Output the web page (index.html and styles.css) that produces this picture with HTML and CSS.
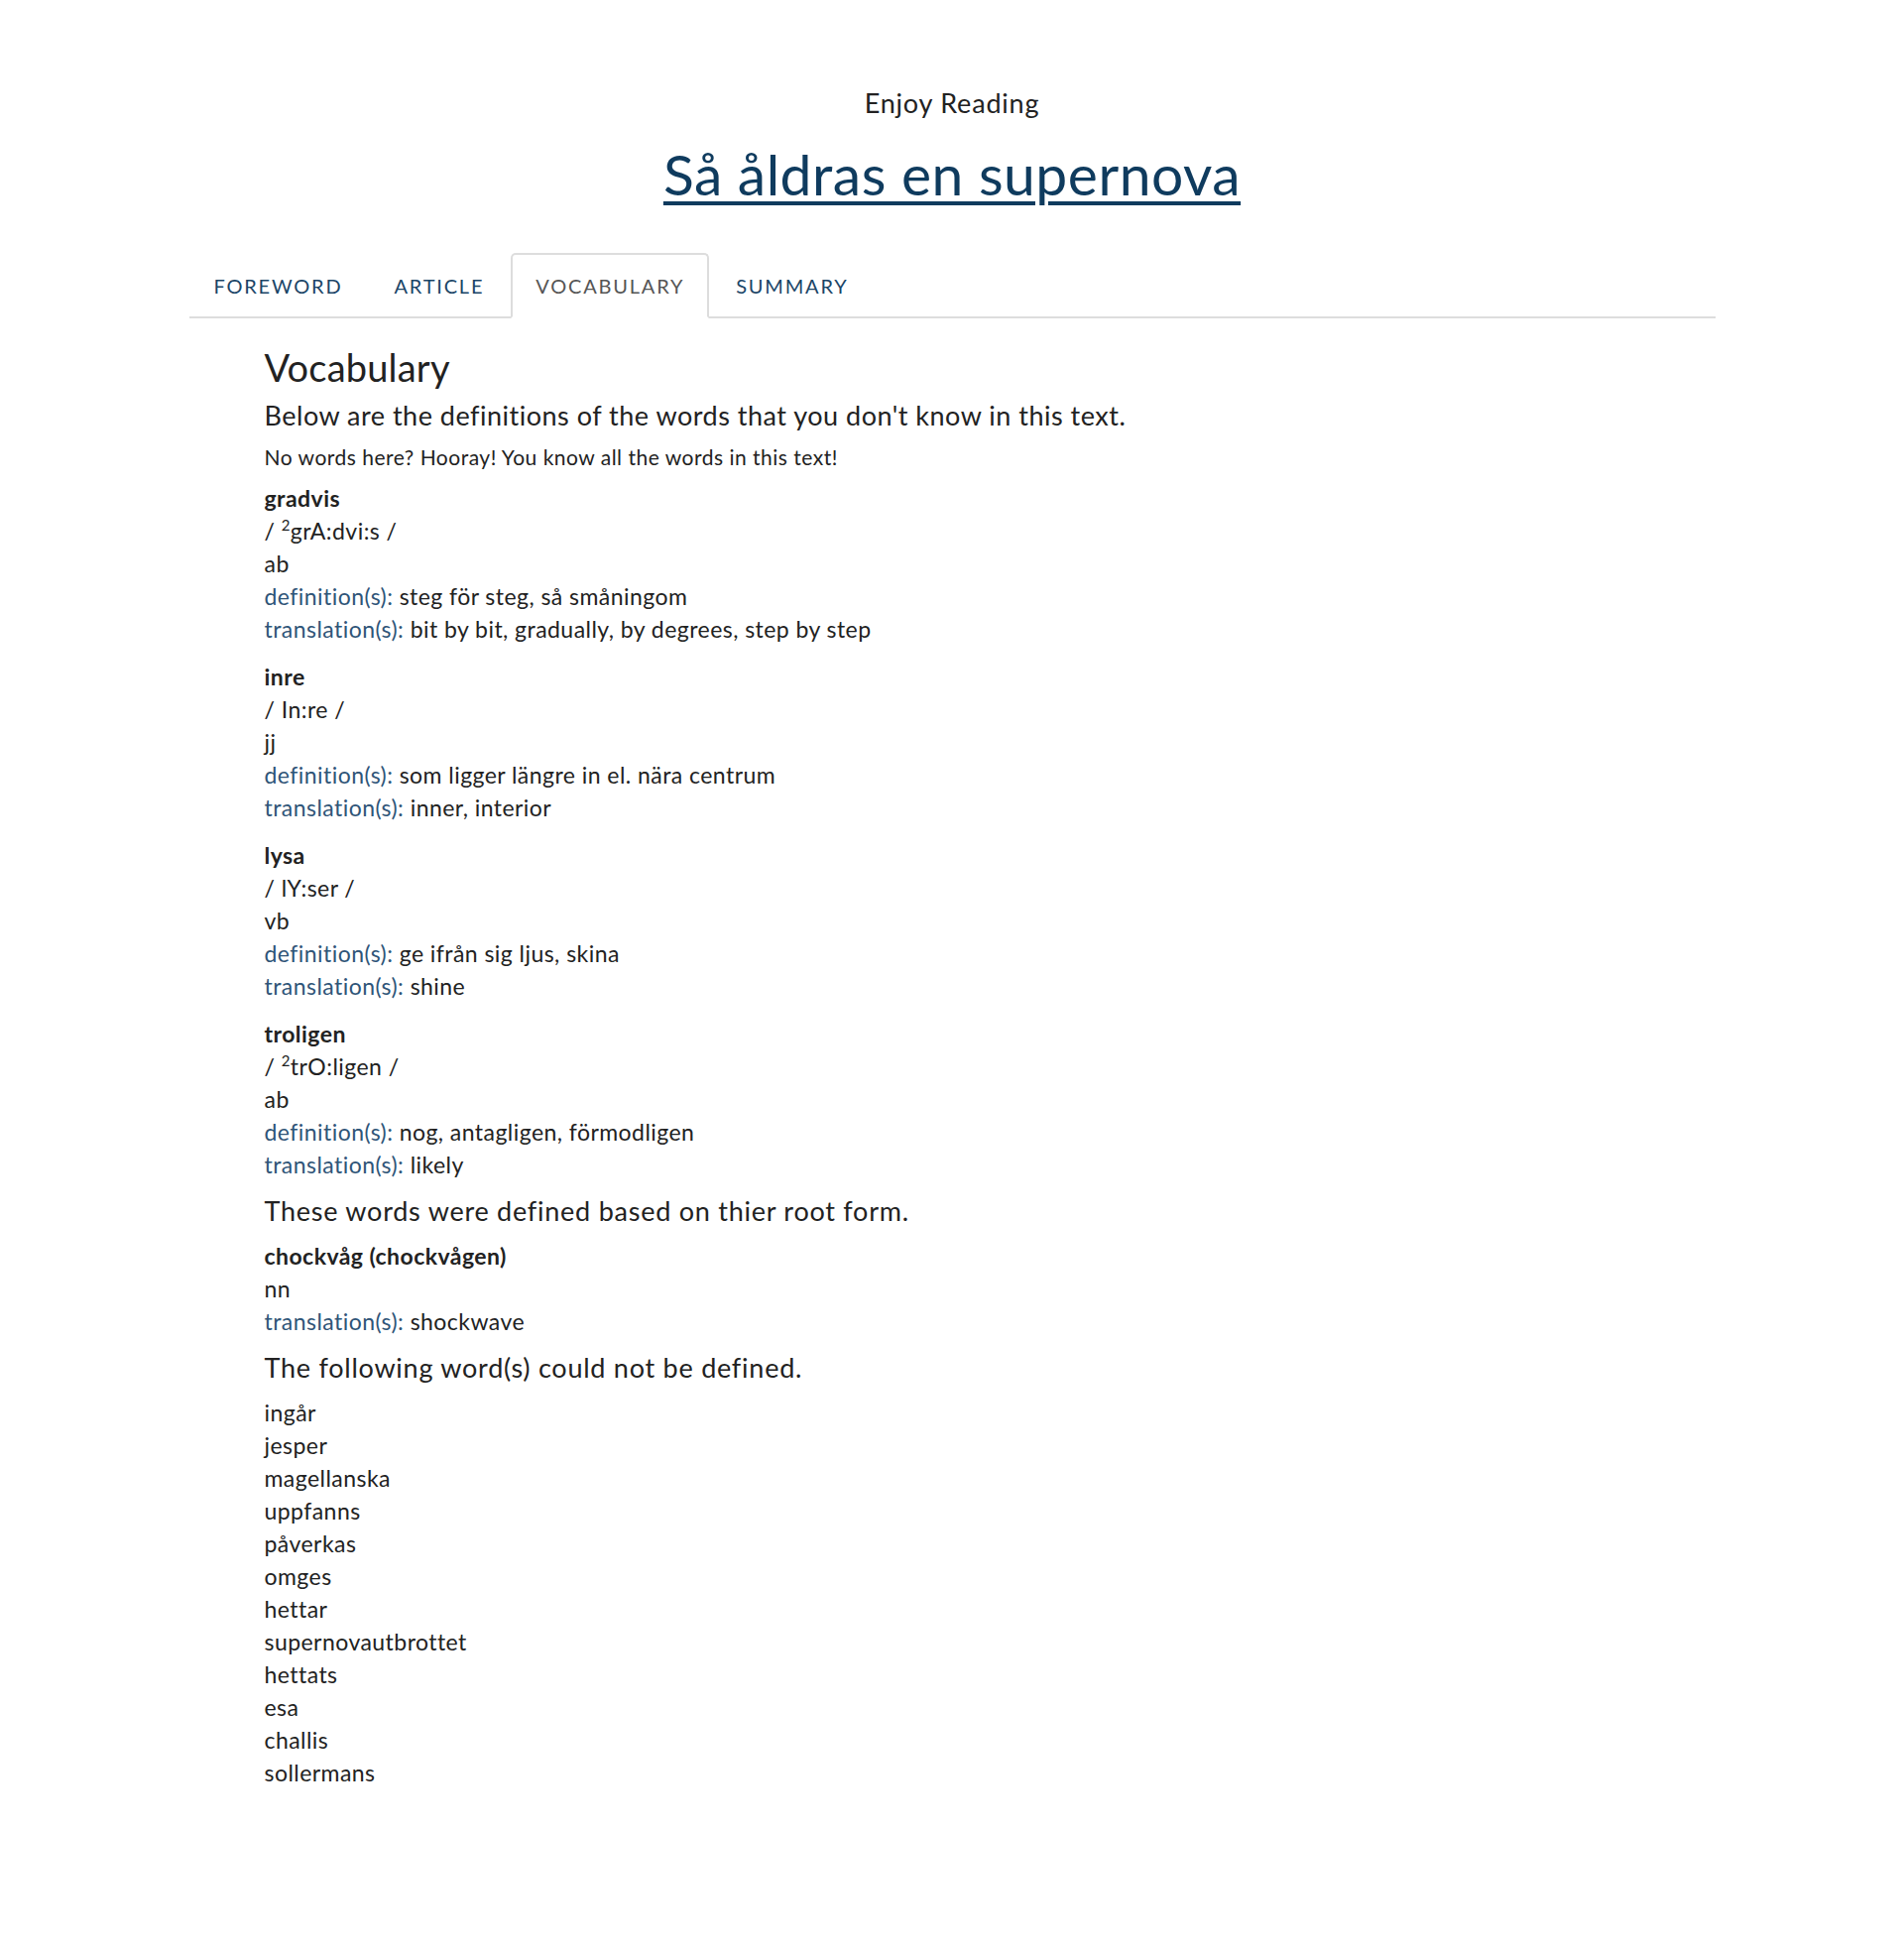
FILE: index.html
```html
<!DOCTYPE html>
<html lang="sv">
<head>
<meta charset="utf-8">
<title>Så åldras en supernova</title>
<link rel="stylesheet" href="styles.css">
</head>
<body>
<header class="page-head">
  <div class="kicker">Enjoy Reading</div>
  <h1 class="title"><a href="#">Så åldras en supernova</a></h1>
</header>
<main class="container">
  <nav class="tabs">
    <a class="tab" href="#">FOREWORD</a>
    <a class="tab" href="#">ARTICLE</a>
    <a class="tab active" href="#">VOCABULARY</a>
    <a class="tab" href="#">SUMMARY</a>
  </nav>
  <section class="content">
    <h2 class="h-vocab">Vocabulary</h2>
    <p class="lead">Below are the definitions of the words that you don't know in this text.</p>
    <p class="note">No words here? Hooray! You know all the words in this text!</p>

    <div class="entry">
      <div class="word">gradvis</div>
      <div>/ <sup>2</sup>grA:dvi:s /</div>
      <div>ab</div>
      <div><span class="lbl">definition(s):</span> steg för steg, så småningom</div>
      <div><span class="lbl">translation(s):</span> bit by bit, gradually, by degrees, step by step</div>
    </div>
    <div class="entry">
      <div class="word">inre</div>
      <div>/ In:re /</div>
      <div>jj</div>
      <div><span class="lbl">definition(s):</span> som ligger längre in el. nära centrum</div>
      <div><span class="lbl">translation(s):</span> inner, interior</div>
    </div>
    <div class="entry">
      <div class="word">lysa</div>
      <div>/ lY:ser /</div>
      <div>vb</div>
      <div><span class="lbl">definition(s):</span> ge ifrån sig ljus, skina</div>
      <div><span class="lbl">translation(s):</span> shine</div>
    </div>
    <div class="entry">
      <div class="word">troligen</div>
      <div>/ <sup>2</sup>trO:ligen /</div>
      <div>ab</div>
      <div><span class="lbl">definition(s):</span> nog, antagligen, förmodligen</div>
      <div><span class="lbl">translation(s):</span> likely</div>
    </div>

    <p class="lead sub">These words were defined based on thier root form.</p>
    <div class="entry">
      <div class="word">chockvåg (chockvågen)</div>
      <div>nn</div>
      <div><span class="lbl">translation(s):</span> shockwave</div>
    </div>

    <p class="lead sub">The following word(s) could not be defined.</p>
    <ul class="undefined">
      <li>ingår</li>
      <li>jesper</li>
      <li>magellanska</li>
      <li>uppfanns</li>
      <li>påverkas</li>
      <li>omges</li>
      <li>hettar</li>
      <li>supernovautbrottet</li>
      <li>hettats</li>
      <li>esa</li>
      <li>challis</li>
      <li>sollermans</li>
    </ul>
  </section>
</main>
</body>
</html>
```

FILE: styles.css
```css
* { box-sizing: border-box; }
html, body { margin: 0; padding: 0; background: #fff; }
body {
  font-family: Lato, "Open Sans", sans-serif;
  color: #222;
  min-height: 1969px;
}
.page-head {
  text-align: center;
  padding-top: 88px;
}
.kicker {
  font-size: 27px;
  line-height: 32px;
  color: #222;
  letter-spacing: 0.8px;
}
.title {
  margin: 20px 0 0;
  font-size: 57px;
  font-weight: 400;
  line-height: 70px;
  letter-spacing: 0.5px;
}
.title a {
  color: #0f3b5e;
  text-decoration: underline;
  text-decoration-thickness: 4px;
  text-underline-offset: 6px;
}
.container {
  width: 1539px;
  margin: 0 auto;
  padding-top: 45px;
}
.tabs {
  display: flex;
  border-bottom: 2px solid #ddd;
}
.tab {
  display: block;
  padding: 17px 23px 17px;
  margin-right: 2px;
  margin-bottom: -2px;
  font-size: 20px;
  line-height: 28px;
  color: #1b4567;
  text-decoration: none;
  border: 2px solid transparent;
  border-radius: 5px 5px 0 0;
  letter-spacing: 1.8px;
}
.tab.active {
  color: #555;
  border-color: #ddd;
  border-bottom-color: #fff;
}
.content {
  padding-left: 76px;
  font-size: 23px;
  line-height: 33px;
  letter-spacing: 0.45px;
  color: #222;
}
.h-vocab {
  margin: 27px 0 0;
  font-size: 38px;
  line-height: 44px;
  font-weight: 400;
  letter-spacing: 0.2px;
}
.lead {
  margin: 9px 0 0;
  font-size: 27px;
  line-height: 36px;
  letter-spacing: 0.5px;
}
.lead.sub { letter-spacing: 0.75px; }
.note {
  margin: 10px 0 0;
  font-size: 21px;
  line-height: 28px;
  letter-spacing: 0.5px;
}
.entry {
  margin-top: 11px;
}
.entry + .entry { margin-top: 15px; }
.word { font-weight: 700; }
.lbl { color: #2f5578; }
sup { font-size: 15px; line-height: 0; vertical-align: 9px; }
.lead.sub { margin-top: 12px; }
.undefined {
  list-style: none;
  margin: 11px 0 0;
  padding: 0;
}
```
